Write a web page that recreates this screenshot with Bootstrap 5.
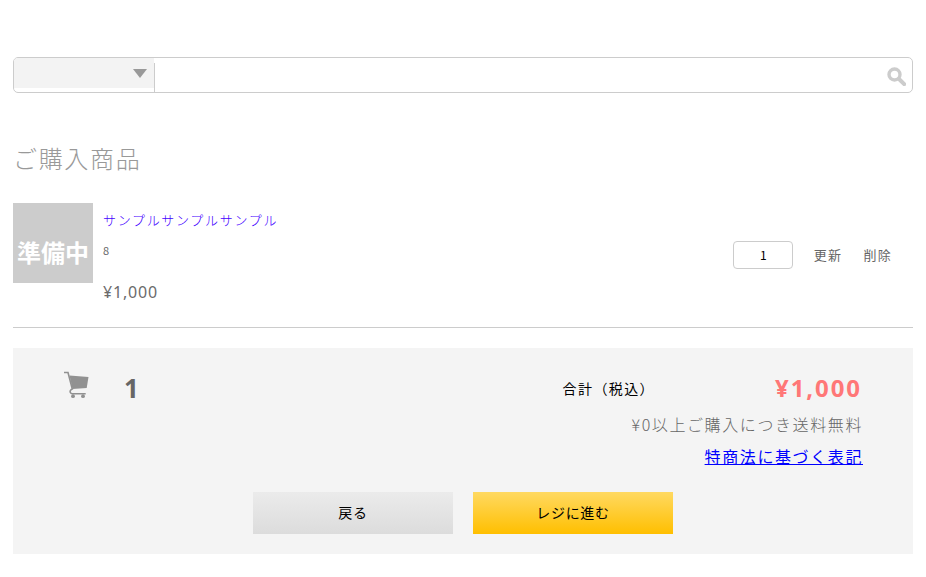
<!DOCTYPE html>
<html lang="ja">
<head>
<meta charset="utf-8">
<title>ご購入商品</title>
<link href="https://cdn.jsdelivr.net/npm/bootstrap@5.3.0/dist/css/bootstrap.min.css" rel="stylesheet">
<style>
body{font-family:"Noto Sans CJK JP","Noto Sans",sans-serif;color:#666;background:#fff;letter-spacing:.05em;font-size:14px}
.pg{padding:57px 13px 0}
.srch{height:36px;border:1px solid #ccc;border-radius:5px;overflow:hidden}
.srch-sel{width:140px;height:30px;background:#f3f3f3;position:relative;flex:none}
.srch-sel::after{content:"";position:absolute;right:7px;top:11px;border-left:7px solid transparent;border-right:7px solid transparent;border-top:9px solid #999}
.srch-in{flex:1;border-left:1px solid #ccc;margin-top:5px;height:30px}
.srch-ic{margin:3px 6px 0 0;align-self:center}
.ttl{font-size:24px;font-weight:300;color:#999;margin:47px 0 0;line-height:36px;letter-spacing:.07em}
.itm{margin-top:27px;height:125px;border-bottom:1px solid #ccc}
.thumb{width:80px;height:80px;background:#ccc;color:#fff;font-weight:700;font-size:24px;line-height:98px;text-align:center;letter-spacing:0;flex:none;white-space:nowrap}
.info{padding-left:10px}
.nm{font-size:13px;color:#40f;line-height:20px;margin-top:7px;letter-spacing:.13em;font-weight:300}
.sku{font-size:11px;line-height:16px;margin-top:12px;letter-spacing:0}
.prc{font-size:16px;line-height:24px;margin-top:22px;font-family:"Noto Sans","Noto Sans CJK JP",sans-serif;font-weight:400;letter-spacing:.05em;color:#6b6b6b}
.ctl{margin:38px 21px 0 auto;height:28px;gap:21px;font-size:13px;letter-spacing:.1em}
.qty{width:60px;height:28px;border:1px solid #ccc;border-radius:4px;color:#000;font-size:12px;line-height:26px;text-align:center;letter-spacing:0;padding-left:1px}
.pnl{margin-top:20px;background:#f4f4f4;height:206px}
.pnl-top{padding:22px 51px 0 50px}
.cart{width:26px;height:28px;margin-top:1px;flex:none}
.cnt{font-size:26px;font-weight:700;margin-left:35px;line-height:36px;letter-spacing:0;font-family:"Noto Sans",sans-serif;color:#666}
.sumr{text-align:right}
.tot{height:36px;align-items:center}
.tot-l{font-size:14px;color:#000;letter-spacing:.1em;margin-right:120px}
.tot-v{font-size:24px;font-weight:700;color:#f77;font-family:"Noto Sans",sans-serif;letter-spacing:.08em;line-height:36px}
.ship{font-size:16px;font-weight:300;line-height:24px;margin-top:6px;color:#666;letter-spacing:.1em;margin-right:-1px}
.law{font-size:16px;line-height:24px;margin-top:8px;color:#00f;display:block;letter-spacing:.1em;margin-right:-1px}
.law:hover{color:#00f}
.btns{gap:20px;margin-top:24px}
.act{width:200px;height:42px;border:0;border-radius:0;color:#000;font-size:14px;display:flex;align-items:center;justify-content:center;text-decoration:none;letter-spacing:.05em;padding-bottom:2px}
.back{background:linear-gradient(#ebebeb,#dcdcdc)}
.go{background:linear-gradient(#ffd961,#ffbf00)}
</style>
</head>
<body>
<div class="pg">
  <div class="srch d-flex">
    <div class="srch-sel"></div>
    <div class="srch-in"></div>
    <svg class="srch-ic" width="19" height="19" viewBox="0 0 19 19" fill="none" stroke="#ccc"><circle cx="7.500" cy="7.500" r="5.500" stroke-width="3.400"/><path d="M12 12l5.200 5.200" stroke-width="4" stroke-linecap="round"/></svg>
  </div>
  <h1 class="ttl">ご購入商品</h1>
  <div class="itm d-flex">
    <div class="thumb">準備中</div>
    <div class="info">
      <div class="nm">サンプルサンプルサンプル</div>
      <div class="sku">8</div>
      <div class="prc">¥1,000</div>
    </div>
    <div class="ctl d-flex align-items-center">
      <div class="qty">1</div>
      <span>更新</span>
      <span>削除</span>
    </div>
  </div>
  <div class="pnl">
    <div class="pnl-top d-flex justify-content-between">
      <div class="d-flex">
        <svg class="cart" viewBox="0 0 26 28"><path d="M6.500 4.500L25.500 6 23.700 17 9.500 18z" fill="#919191"/><path d="M1 1.500h4l4.300 16.500c-2 .5-2.500 2.500-2 3.500s1 1.200 2 1.200h13.400" fill="none" stroke="#919191" stroke-width="1.600"/><circle cx="10" cy="25.200" r="1.900" fill="#919191"/><circle cx="20" cy="25.200" r="1.900" fill="#919191"/></svg>
        <div class="cnt">1</div>
      </div>
      <div class="sumr">
        <div class="tot d-flex justify-content-end"><span class="tot-l">合計（税込）</span><span class="tot-v">¥1,000</span></div>
        <div class="ship">¥0以上ご購入につき送料無料</div>
        <a class="law" href="#">特商法に基づく表記</a>
      </div>
    </div>
    <div class="btns d-flex justify-content-center">
      <a class="act back" href="#">戻る</a>
      <a class="act go" href="#">レジに進む</a>
    </div>
  </div>
</div>
<script src="https://cdn.jsdelivr.net/npm/bootstrap@5.3.0/dist/js/bootstrap.bundle.min.js"></script>
</body>
</html>
